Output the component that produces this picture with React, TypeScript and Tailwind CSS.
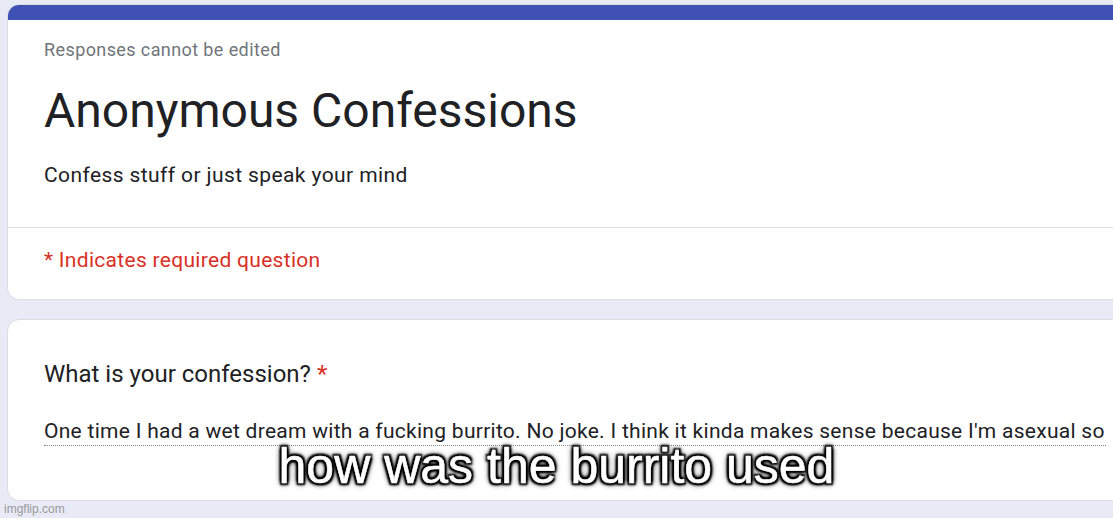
export default function App() {
  return (
    <div className="relative h-[518px] w-[1113px] overflow-hidden bg-[#e8eaf6] pl-[7px] pt-[4px] font-['Roboto',sans-serif]">
      <div className="w-[1200px] overflow-hidden rounded-[12px] border border-[#dadce0] bg-white">
        <div className="h-[15px] bg-[#3f51b5]" />
        <div className="px-[36px] pb-[38px] pt-[18px]">
          <div className="text-[18px] leading-[24px] tracking-[0.4px] text-[#70757a]">Responses cannot be edited</div>
          <h1 className="mt-[21px] text-[48px] leading-[56px] text-[#202124]">Anonymous Confessions</h1>
          <p className="mt-[22px] text-[21px] leading-[28px] tracking-[0.4px] text-[#202124]">Confess stuff or just speak your mind</p>
        </div>
        <div className="border-t border-[#dadce0] px-[36px] pb-[25px] pt-[18px]">
          <div className="text-[21px] leading-[28px] tracking-[0.3px] text-[#d93025]">* Indicates required question</div>
        </div>
      </div>

      <div className="mt-[19px] w-[1200px] rounded-[12px] border border-[#dadce0] bg-white px-[36px] pb-[54px] pt-[38px]">
        <div className="text-[24px] leading-[32px] text-[#202124]">
          What is your confession? <span className="text-[#d93025]">*</span>
        </div>
        <div className="mt-[27px] w-[1062px] border-b border-dotted border-[#80868b] text-[21px] leading-[28px] tracking-[0.28px] whitespace-nowrap text-[#202124]">
          One time I had a wet dream with a fucking burrito. No joke. I think it kinda makes sense because I'm asexual so
        </div>
      </div>

      <div className="absolute left-0 right-0 top-[441px] text-center font-['Liberation_Sans',Arial,sans-serif] text-[50px] leading-[50px] text-white [-webkit-text-stroke:0.6px_#fff] [text-shadow:2px_2px_2px_#000,-2px_-2px_2px_#000,2px_-2px_2px_#000,-2px_2px_2px_#000,0_0_3px_#000,0_0_5px_#000,0_0_7px_#000]">
        how was the burrito used
      </div>
      <div className="absolute left-[4px] top-[502px] font-['Liberation_Sans',Arial,sans-serif] text-[12px] leading-[14px] text-[#9a9a9a]">
        imgflip.com
      </div>
    </div>
  );
}
